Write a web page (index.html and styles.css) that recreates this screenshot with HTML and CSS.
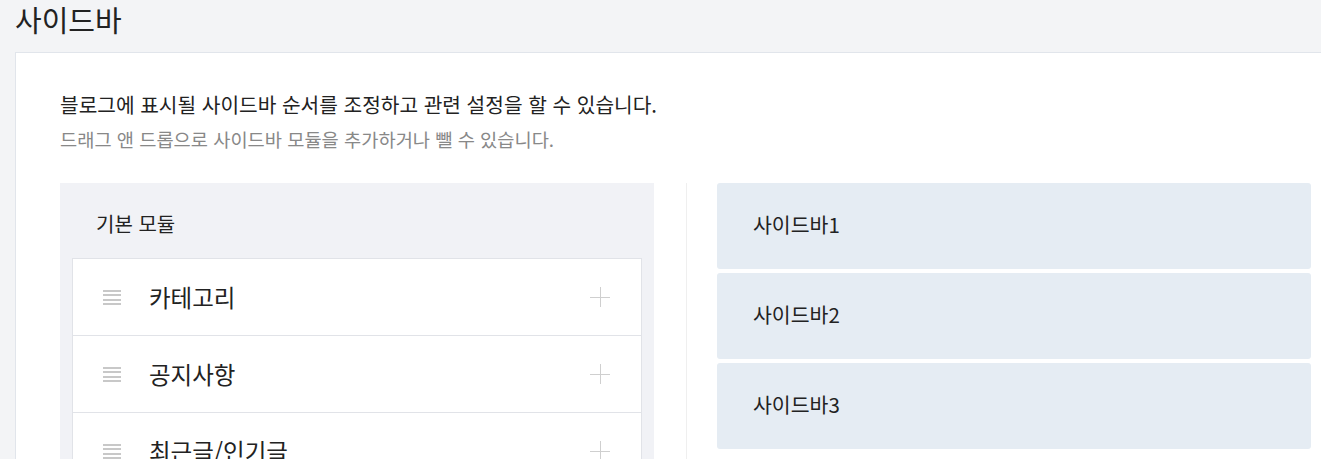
FILE: index.html
```html
<!DOCTYPE html>
<html lang="ko">
<head>
    <meta charset="UTF-8">
    <meta name="viewport" content="width=device-width, initial-scale=1.0">
    <title>사이드바</title>
    <link rel="stylesheet" href="styles.css">
</head>
<body>
    <!-- Page title -->
    <h1 class="page-title">사이드바</h1>

    <div class="content">
        <p class="desc">블로그에 표시될 사이드바 순서를 조정하고 관련 설정을 할 수 있습니다.</p>
        <p class="desc-sub">드래그 앤 드롭으로 사이드바 모듈을 추가하거나 뺄 수 있습니다.</p>

        <div class="editor">
            <!-- Module list -->
            <div class="module-panel">
                <h2 class="panel-title">기본 모듈</h2>
                <ul class="module-list">
                    <li class="module-item">
                        <span class="handle"><i></i><i></i><i></i><i></i></span>
                        <span class="module-name">카테고리</span>
                        <span class="add-btn"></span>
                    </li>
                    <li class="module-item">
                        <span class="handle"><i></i><i></i><i></i><i></i></span>
                        <span class="module-name">공지사항</span>
                        <span class="add-btn"></span>
                    </li>
                    <li class="module-item">
                        <span class="handle"><i></i><i></i><i></i><i></i></span>
                        <span class="module-name">최근글/인기글</span>
                        <span class="add-btn"></span>
                    </li>
                </ul>
            </div>

            <div class="divider"></div>

            <!-- Sidebar slots -->
            <div class="sidebar-slots">
                <div class="slot">사이드바1</div>
                <div class="slot">사이드바2</div>
                <div class="slot">사이드바3</div>
            </div>
        </div>
    </div>
</body>
</html>
```

FILE: styles.css
```css
/* Base */
body {
    margin: 0;
    background-color: #f3f4f6;
    font-family: "Noto Sans CJK KR", "Noto Sans", sans-serif;
    color: #222;
    overflow: hidden;
}

.page-title {
    margin: 0;
    height: 52px;
    padding-left: 15px;
    font-size: 29px;
    font-weight: 400;
    line-height: 38px;
}

/* White content card */
.content {
    background-color: #fff;
    border-top: 1px solid #e1e5eb;
    border-left: 1px solid #e1e5eb;
    margin: 0 -40px 0 15px;
    padding: 37px 44px 0 44px;
    min-height: 500px;
}

.desc {
    margin: 0;
    font-size: 20.25px;
    line-height: 30px;
}

.desc-sub {
    margin: 6px 0 0;
    font-size: 18.7px;
    line-height: 26px;
    color: #888;
}

.editor {
    display: flex;
    margin-top: 31px;
}

/* Left: module panel */
.module-panel {
    width: 594px;
    background-color: #f1f2f6;
    padding: 0 12px;
    box-sizing: border-box;
}

.panel-title {
    margin: 0;
    height: 75px;
    padding-left: 24px;
    font-size: 20px;
    font-weight: 400;
    line-height: 82px;
}

.module-list {
    list-style: none;
    margin: 0;
    padding: 0;
    background-color: #fff;
    border: 1px solid #e1e3e8;
}

.module-item {
    display: flex;
    align-items: center;
    height: 76px;
    padding: 0 31px 0 30px;
    border-bottom: 1px solid #e1e3e8;
}

.handle {
    display: flex;
    flex-direction: column;
    gap: 2.6px;
    width: 18px;
    margin-top: 1px;
}

.handle i {
    display: block;
    height: 2px;
    background-color: #c8c8c8;
}

.module-name {
    flex: 1;
    margin-left: 28px;
    font-size: 23.5px;
}

.add-btn {
    position: relative;
    width: 20px;
    height: 20px;
}

.add-btn::before,
.add-btn::after {
    content: "";
    position: absolute;
    background-color: #cfcfcf;
}

.add-btn::before {
    left: 0;
    right: 0;
    top: 10px;
    height: 1px;
}

.add-btn::after {
    top: 0;
    bottom: 0;
    left: 10px;
    width: 1px;
}

.divider {
    width: 1px;
    background-color: #efefef;
    margin: 0 30px 0 32px;
}

/* Right: sidebar slots */
.sidebar-slots {
    width: 594px;
    display: flex;
    flex-direction: column;
    gap: 4px;
}

.slot {
    height: 86px;
    box-sizing: border-box;
    padding: 27px 36px 0;
    background-color: #e5ecf3;
    border-radius: 3px;
    font-size: 20.5px;
    line-height: 28px;
}
```
